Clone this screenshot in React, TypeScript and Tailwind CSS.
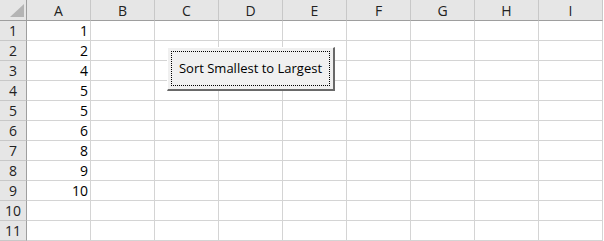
import React from "react";

const cols = ["A", "B", "C", "D", "E", "F", "G", "H", "I"];
const values: Record<number, string> = { 1: "1", 2: "2", 3: "4", 4: "5", 5: "5", 6: "6", 7: "8", 8: "9", 9: "10" };

export default function App() {
  const rows = Array.from({ length: 11 }, (_, i) => i + 1);
  return (
    <div
      className="relative w-[604px] h-[241px] bg-white overflow-hidden"
      style={{ fontFamily: "'Open Sans', 'Liberation Sans', sans-serif" }}
    >
      <div className="grid grid-cols-[27px_repeat(9,64px)] grid-rows-[21px_repeat(11,20px)] w-[603px]">
        <div className="relative bg-[#e6e6e6] border-r border-b border-[#9e9e9e]">
          <svg className="absolute left-[10px] top-[4px]" width="15" height="14" viewBox="0 0 15 14">
            <polygon points="14,0 14,13 0,13" fill="#b4b4b4" />
          </svg>
        </div>
        {cols.map((c) => (
          <div
            key={c}
            className="bg-[#e6e6e6] border-r border-r-[#c8c8c8] border-b border-b-[#9e9e9e] flex items-center justify-center text-[14px] text-[#222] leading-none pt-[1px]"
          >
            {c}
          </div>
        ))}
        {rows.map((r) => (
          <React.Fragment key={r}>
            <div className="bg-[#e6e6e6] border-r border-r-[#9e9e9e] border-b border-b-[#c8c8c8] flex items-center justify-center text-[14px] text-[#222] leading-none pt-[1px]">
              {r}
            </div>
            {cols.map((c, ci) => (
              <div
                key={c}
                className="border-r border-b border-[#d4d4d4] flex items-end justify-end pr-[2px] pb-[2px] text-[14px] text-black leading-none"
              >
                {ci === 0 ? values[r] ?? "" : ""}
              </div>
            ))}
          </React.Fragment>
        ))}
      </div>
      <div className="absolute left-[167px] top-[47px] w-[168px] h-[44px] bg-[#f0f0f0] border-t border-l border-t-white border-l-white border-r-2 border-b-2 border-r-[#696969] border-b-[#696969]">
        <div className="absolute inset-[3px] border border-dotted border-black flex items-center justify-center text-[13px] text-black">
          Sort Smallest to Largest
        </div>
      </div>
    </div>
  );
}
